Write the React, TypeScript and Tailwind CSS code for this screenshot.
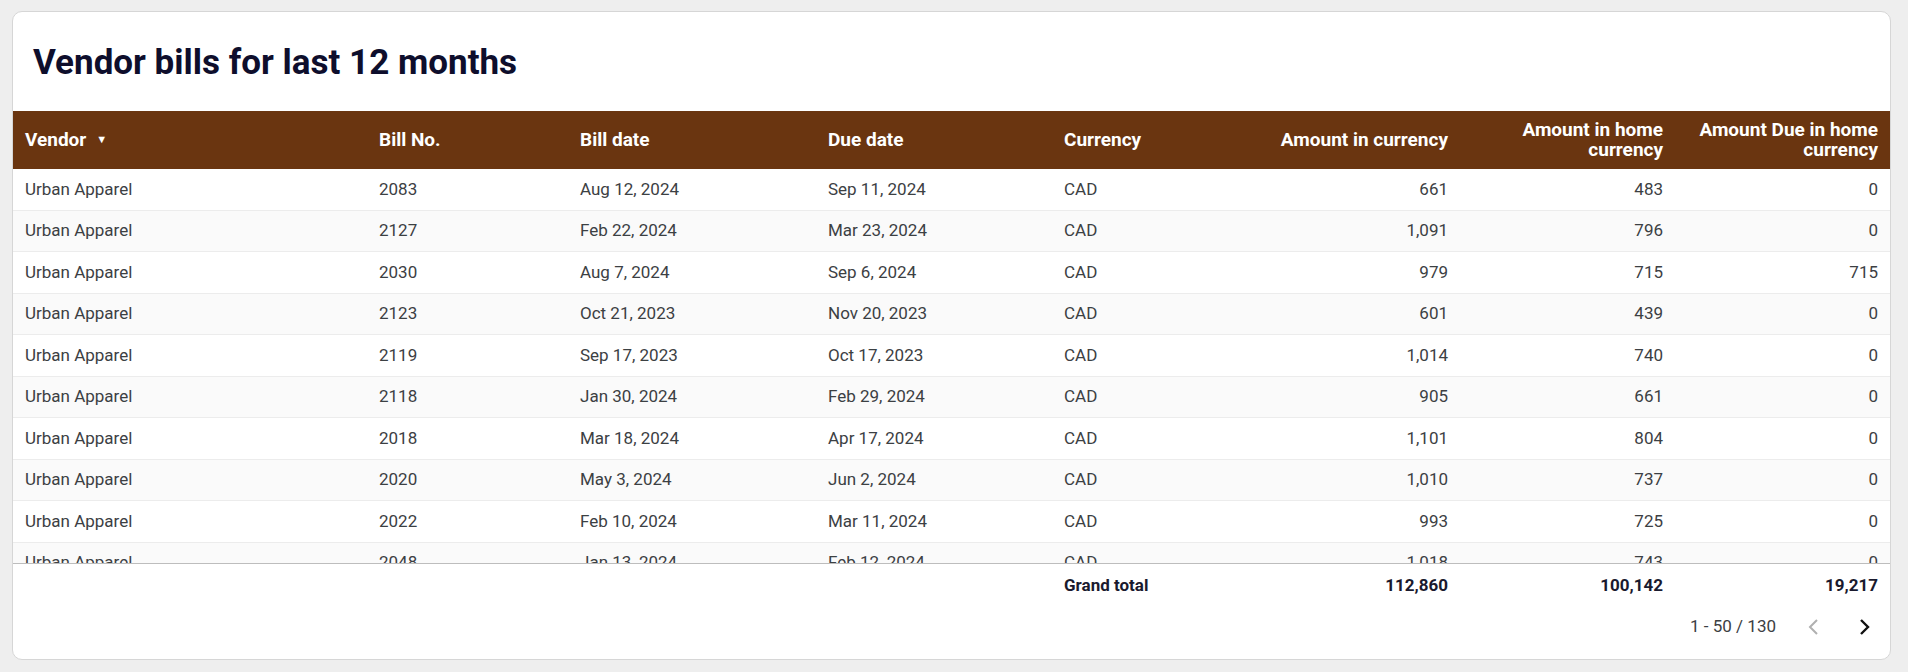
import React from "react";

const rows = [
  ["2083","Aug 12, 2024","Sep 11, 2024","661","483","0"],
  ["2127","Feb 22, 2024","Mar 23, 2024","1,091","796","0"],
  ["2030","Aug 7, 2024","Sep 6, 2024","979","715","715"],
  ["2123","Oct 21, 2023","Nov 20, 2023","601","439","0"],
  ["2119","Sep 17, 2023","Oct 17, 2023","1,014","740","0"],
  ["2118","Jan 30, 2024","Feb 29, 2024","905","661","0"],
  ["2018","Mar 18, 2024","Apr 17, 2024","1,101","804","0"],
  ["2020","May 3, 2024","Jun 2, 2024","1,010","737","0"],
  ["2022","Feb 10, 2024","Mar 11, 2024","993","725","0"],
  ["2048","Jan 13, 2024","Feb 12, 2024","1,018","743","0"],
];

const cols = "grid grid-cols-[354px_201px_248px_236px_199px_209px_215px_215px]";

export default function App() {
  return (
    <div className="w-[1908px] h-[672px] bg-[#eeeeee] pt-[11px] pl-[12px]" style={{ fontFamily: "Roboto, 'Liberation Sans', sans-serif" }}>
      <div className="w-[1879px] h-[649px] bg-white border border-[#d6d6d6] rounded-[10px] overflow-hidden flex flex-col">
        <div className="h-[99px] flex items-center pl-[20px] pt-[3px]">
          <h1 className="text-[35px] font-bold text-[#0e0e2c]">Vendor bills for last 12 months</h1>
        </div>
        <div className={`${cols} h-[58px] bg-[#6a3510] text-white text-[19px] leading-[20px] font-bold items-center`}>
          <div className="px-[12px] flex items-center gap-[10px]">Vendor <span className="text-[11px]">▼</span></div>
          <div className="px-[12px]">Bill No.</div>
          <div className="px-[12px]">Bill date</div>
          <div className="px-[12px]">Due date</div>
          <div className="px-[12px]">Currency</div>
          <div className="px-[12px] text-right">Amount in currency</div>
          <div className="px-[12px] text-right">Amount in home currency</div>
          <div className="px-[12px] text-right">Amount Due in home currency</div>
        </div>
        <div className="h-[395px] overflow-hidden border-b border-[#bdbdbd]">
          {rows.map((r, i) => (
            <div key={i} className={`${cols} h-[41.5px] items-center text-[17px] text-[#3c4043] border-b border-[#ececec] ${i % 2 ? "bg-[#fafafa]" : "bg-white"}`}>
              <div className="px-[12px]">Urban Apparel</div>
              <div className="px-[12px]">{r[0]}</div>
              <div className="px-[12px]">{r[1]}</div>
              <div className="px-[12px]">{r[2]}</div>
              <div className="px-[12px]">CAD</div>
              <div className="px-[12px] text-right">{r[3]}</div>
              <div className="px-[12px] text-right">{r[4]}</div>
              <div className="px-[12px] text-right">{r[5]}</div>
            </div>
          ))}
        </div>
        <div className={`${cols} h-[43px] items-center text-[17px] font-bold text-[#1a1a2e]`}>
          <div /><div /><div /><div />
          <div className="px-[12px]">Grand total</div>
          <div className="px-[12px] text-right">112,860</div>
          <div className="px-[12px] text-right">100,142</div>
          <div className="px-[12px] text-right">19,217</div>
        </div>
        <div className="flex items-center justify-end pr-[14px] h-[40px] text-[17px] text-[#3c4043]">
          <span className="mr-[26px]">1 - 50 / 130</span>
          <svg width="24" height="24" viewBox="0 0 24 24" className="mr-[26px]"><path d="M15 5l-7 7 7 7" fill="none" stroke="#b0b0b0" strokeWidth="2"/></svg>
          <svg width="24" height="24" viewBox="0 0 24 24"><path d="M9 5l7 7-7 7" fill="none" stroke="#111" strokeWidth="2.4"/></svg>
        </div>
      </div>
    </div>
  );
}
